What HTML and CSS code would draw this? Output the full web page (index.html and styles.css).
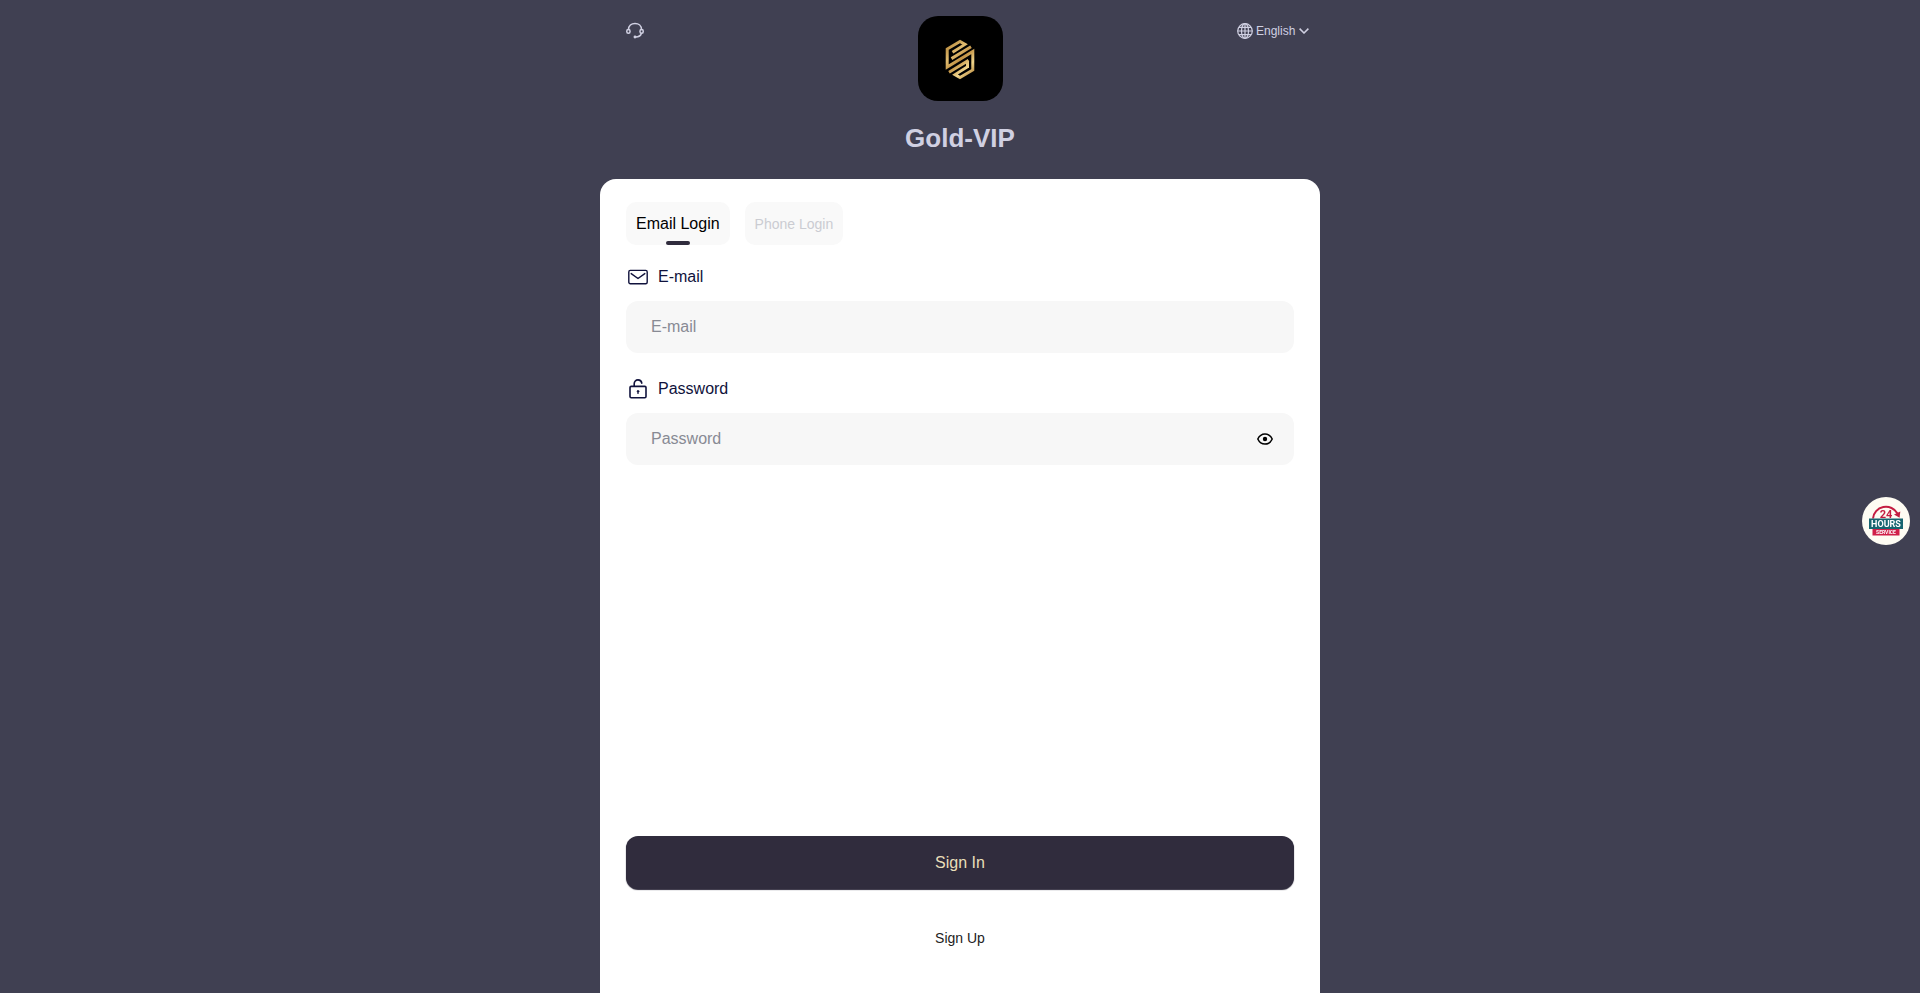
FILE: index.html
```html
<!DOCTYPE html>
<html lang="en">
<head>
<meta charset="UTF-8" />
<meta name="viewport" content="width=device-width, initial-scale=1" />
<title>Gold-VIP</title>
<link rel="stylesheet" href="styles.css">
</head>
<body>

<div class="page">
  <header class="top">
    <a class="support" href="#support" aria-label="Customer service">
      <svg width="18" height="18" viewBox="0 0 18 18" fill="none" stroke="currentColor" stroke-width="1.5" stroke-linecap="round">
        <path d="M2.500 7.400C2.500 3.800 5.300 1.400 9 1.400s6.500 2.400 6.500 6"/>
        <rect x="0.800" y="7.400" width="3.200" height="3.800" rx="1.500"/>
        <rect x="14" y="7.400" width="3.200" height="3.800" rx="1.500"/>
        <path d="M15.300 11.500c-.5 2.400-2.500 3.400-5.800 3.500"/>
        <circle cx="9" cy="15" r="0.700" fill="currentColor"/>
      </svg>
    </a>

    <div class="logo">
      <svg width="40" height="48" viewBox="0 0 40 48" fill="none" stroke="url(#gold)" stroke-width="3">
        <defs>
          <linearGradient id="gold" gradientUnits="userSpaceOnUse" x1="6" y1="10" x2="34" y2="40">
            <stop offset="0" stop-color="#b98a3c"/>
            <stop offset="0.300" stop-color="#e0bc70"/>
            <stop offset="0.500" stop-color="#c39345"/>
            <stop offset="0.750" stop-color="#f0d58c"/>
            <stop offset="1" stop-color="#b5843a"/>
          </linearGradient>
        </defs>
        <path d="M12.500 17.200 25 9.400 20 6.400 7.200 14V32L32.800 16.500V35L20 42.600 15 39.600 27.500 31.800"/>
        <path d="M11.500 23.600 31 11.800M9 37.200 28.500 25.400M27.500 33V25.500"/>
      </svg>
    </div>

    <label class="language">
      <svg width="16" height="16" viewBox="0 0 16 16" fill="none" stroke="currentColor" stroke-width="1.200">
        <circle cx="8" cy="8" r="7.300"/>
        <ellipse cx="8" cy="8" rx="3.500" ry="7.300"/>
        <path d="M8 .7v14.600M.7 8h14.600M2 4.400h12M2 11.600h12"/>
      </svg>
      <select aria-label="Language">
        <option>English</option>
      </select>
      <svg width="10" height="6" viewBox="0 0 10 6" fill="none" stroke="currentColor" stroke-width="1.500">
        <path d="M.6.600 5 5 9.400.600"/>
      </svg>
    </label>
  </header>

  <h1>Gold-VIP</h1>

  <main class="card">
    <div class="tabs" role="tablist">
      <button class="tab active" type="button" role="tab" aria-selected="true">Email Login</button>
      <button class="tab" type="button" role="tab" aria-selected="false">Phone Login</button>
    </div>

    <form class="form">
      <div class="field">
        <label for="email">
          <svg width="20" height="20" viewBox="0 0 20 20" fill="none" stroke="currentColor" stroke-width="1.400" stroke-linejoin="round" stroke-linecap="round">
            <rect x="0.800" y="3.400" width="18.400" height="13.400" rx="1.500"/>
            <path d="M3.200 6.600 10 11.500l6.800-4.900"/>
          </svg>
          E-mail
        </label>
        <div class="box">
          <input id="email" type="email" placeholder="E-mail">
        </div>
      </div>

      <div class="field">
        <label for="password">
          <svg width="20" height="20" viewBox="0 0 20 20" fill="none" stroke="currentColor" stroke-width="1.600" stroke-linejoin="round" stroke-linecap="round">
            <rect x="2" y="7.400" width="16" height="11.400" rx="1.200"/>
            <path d="M6.200 7.200V4.800c0-2.200 1.600-3.900 3.800-3.900 2 0 3.500 1.300 3.800 3.200"/>
            <path d="M10 13v1.400" stroke-width="1.300"/>
            <circle cx="10" cy="12.300" r="0.800" fill="currentColor" stroke-width="1"/>
          </svg>
          Password
        </label>
        <div class="box">
          <input id="password" type="password" placeholder="Password">
          <button class="eye" type="button" aria-label="Show password">
            <svg width="16" height="12" viewBox="0 0 16 12" fill="none" stroke="currentColor" stroke-width="1.500">
              <path d="M.8 6C2.400 2.500 5 .9 8 .9S13.600 2.500 15.200 6C13.600 9.500 11 11.100 8 11.100S2.400 9.500.8 6z"/>
              <circle cx="8" cy="6" r="2.200" fill="currentColor" stroke="none"/>
            </svg>
          </button>
        </div>
      </div>

      <button class="sign-in" type="submit">Sign In</button>
      <a class="sign-up" href="#register">Sign Up</a>
    </form>
  </main>
</div>

<a class="service" href="#service" aria-label="24 hours service">
  <svg width="48" height="48" viewBox="0 0 48 48">
    <circle cx="24" cy="24" r="24" fill="#fefcf3"/>
    <path d="M11 21.500A13 12.500 0 0 1 35.500 16.500" fill="none" stroke="#c41e42" stroke-width="2"/>
    <path d="M32 17.500 38.300 14.500 37.600 20.800z" fill="#c41e42"/>
    <rect x="10.500" y="32" width="27" height="6.500" fill="#d01f48"/>
    <rect x="7" y="21.500" width="34" height="10.500" fill="#176570"/>
    <text x="24" y="20.500" class="badge-number">24</text>
    <text x="24" y="30" class="badge-hours">HOURS</text>
    <text x="24" y="37" class="badge-service">SERVICE</text>
  </svg>
</a>

</body>
</html>
```
FILE: styles.css
```css
* {
  box-sizing: border-box;
}
body {
  margin: 0;
  background: #404052;
  font-family: "Liberation Sans", Arial, sans-serif;
  font-size: 16px;
}
button, input, select {
  font-family: inherit;
  border: 0;
}
svg {
  display: block;
  flex: none;
}
.page {
  display: flex;
  flex-direction: column;
  max-width: 720px;
  min-height: 100vh;
  margin: 0 auto;
}
.top {
  display: grid;
  grid-template-columns: 1fr auto 1fr;
  padding: 16px 10px 0;
  color: #d0d0e2;
}
.support {
  justify-self: start;
  align-self: start;
  padding: 6px 16px;
  color: inherit;
}
.logo {
  display: flex;
  align-items: center;
  justify-content: center;
  width: 85px;
  height: 85px;
  border-radius: 20px;
  background: #000;
}
.language {
  display: flex;
  align-items: center;
  justify-self: end;
  height: 30px;
  gap: 3px;
  padding-right: 1px;
}
.language select {
  appearance: none;
  padding: 0;
  background: none;
  color: inherit;
  font-size: 12px;
}
h1 {
  margin: 22px 0 26px;
  color: #d0d0e2;
  font-size: 26px;
  line-height: 30px;
  text-align: center;
}
.card {
  display: flex;
  flex: 1;
  flex-direction: column;
  padding: 23px 26px 45px;
  border-radius: 16px 16px 0 0;
  background: #fff;
}
.tabs {
  display: flex;
  gap: 15px;
}
.tab {
  position: relative;
  height: 43px;
  padding: 0 10px;
  border-radius: 10px;
  background: #f9f9f9;
  color: #cbccd2;
  font-size: 14px;
}
.tab.active {
  color: #000;
  font-size: 16px;
}
.tab.active::after {
  content: "";
  position: absolute;
  bottom: 0;
  left: 50%;
  width: 24px;
  height: 4px;
  margin-left: -12px;
  border-radius: 2px;
  background: #302c3d;
}
.form {
  display: flex;
  flex: 1;
  flex-direction: column;
  padding-top: 20px;
}
.field {
  margin-bottom: 24px;
}
.field label {
  display: flex;
  align-items: center;
  gap: 10px;
  height: 24px;
  margin-bottom: 12px;
  padding-left: 2px;
  color: #10123c;
}
.box {
  display: flex;
  align-items: center;
  height: 52px;
  padding: 0 21px 0 25px;
  border-radius: 12px;
  background: #f7f7f7;
}
.box input {
  flex: 1;
  min-width: 0;
  height: 100%;
  padding: 0;
  background: none;
  outline: none;
  color: #10123c;
  font-size: 16px;
}
.box input::placeholder {
  color: #888a94;
}
.eye {
  padding: 0;
  background: none;
  color: #000;
}
.sign-in {
  height: 53px;
  margin-top: auto;
  border-radius: 12px;
  background: #302c3d;
  box-shadow: 0 1px 1px #302c3d;
  color: #e9dfb9;
  font-size: 16px;
}
.sign-up {
  margin: 39px auto 0;
  color: #222;
  font-size: 14px;
  line-height: 20px;
  text-decoration: none;
}
.service {
  position: fixed;
  right: 10px;
  bottom: 448px;
}
.service text {
  font-family: Roboto, "Liberation Sans", sans-serif;
  font-weight: bold;
  text-anchor: middle;
}
.badge-number {
  fill: #c41e42;
  font-size: 11px;
}
.badge-hours {
  fill: #fff;
  font-size: 9px;
}
.badge-service {
  fill: #fff;
  font-size: 5px;
}
```
